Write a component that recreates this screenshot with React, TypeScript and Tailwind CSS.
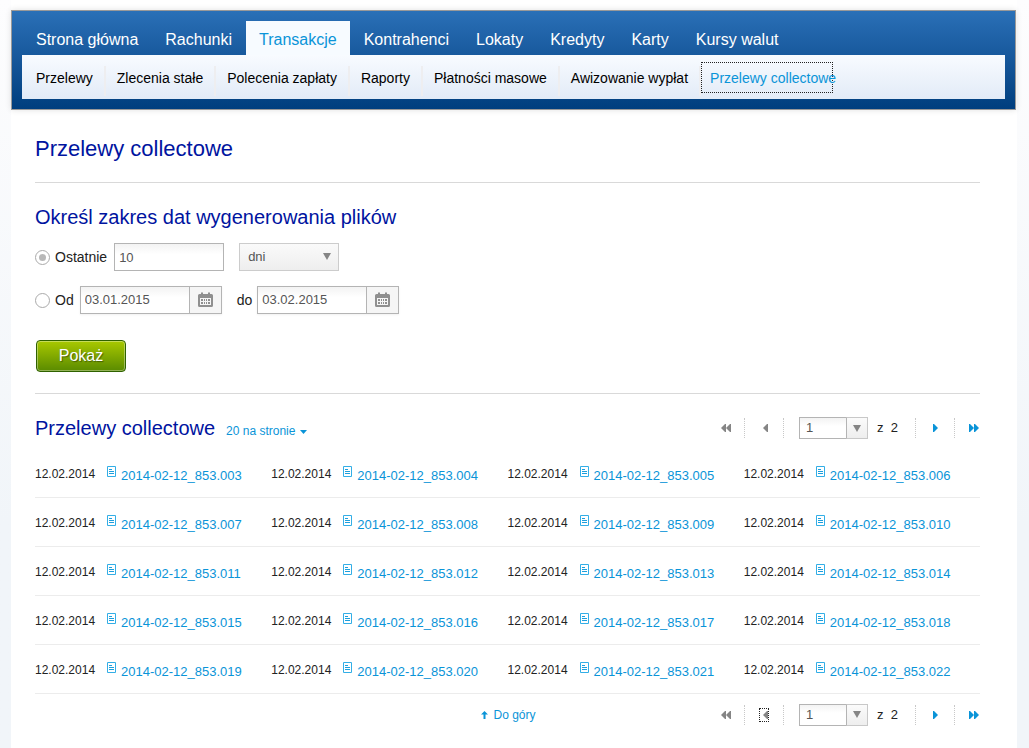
import { useState } from "react";

const mainNav = [
  "Strona główna",
  "Rachunki",
  "Transakcje",
  "Kontrahenci",
  "Lokaty",
  "Kredyty",
  "Karty",
  "Kursy walut",
];

const subNav = [
  "Przelewy",
  "Zlecenia stałe",
  "Polecenia zapłaty",
  "Raporty",
  "Płatności masowe",
  "Awizowanie wypłat",
];

const rows = [
  ["003", "004", "005", "006"],
  ["007", "008", "009", "010"],
  ["011", "012", "013", "014"],
  ["015", "016", "017", "018"],
  ["019", "020", "021", "022"],
];

function DownArrow({ className = "" }: { className?: string }) {
  return (
    <svg viewBox="0 0 8 7" className={`h-[7px] w-2 fill-[#858585] ${className}`} aria-hidden="true">
      <path d="M0 0h8L4 7z" />
    </svg>
  );
}

function CalendarIcon() {
  return (
    <svg viewBox="0 0 15 15" className="mb-px h-[15px] w-[15px]" aria-hidden="true">
      <path
        fill="#8f8f8f"
        fillRule="evenodd"
        d="M3 1.2a1 1 0 0 1 2 0V2h5v-.8a1 1 0 0 1 2 0V2h1.500q1.500 0 1.500 1.500v10q0 1.500-1.500 1.500h-12Q0 15 0 13.500v-10Q0 2 1.500 2H3zM2 6v7h11V6z"
      />
      <path fill="#8f8f8f" d="M3 7h2v2H3zM6 7h1v2H6zM8 7h1v2H8zM10 7h2v2h-2zM3 10h2v2H3zM6 10h1v2H6zM8 10h1v2H8zM10 10h2v2h-2z" />
    </svg>
  );
}

function FileIcon() {
  return (
    <svg viewBox="0 0 9 11" className="h-[11px] w-[9px] shrink-0" aria-hidden="true">
      <path fill="none" stroke="#33aee6" d="M.5.500h8v10h-8z" />
      <path stroke="#1c9fdd" d="M2 3.500h3M2 5.500h5M2 7.500h5" />
    </svg>
  );
}

function PageArrow({ direction, double }: { direction: "left" | "right"; double?: boolean }) {
  const left = direction === "left";
  return (
    <svg
      viewBox={double ? "0 0 10 8" : "0 0 5 8"}
      className={`h-2 ${double ? "w-[10px]" : "w-[5px]"} ${left ? "rotate-180 fill-[#858585]" : "fill-[#0a94d8]"}`}
      aria-hidden="true"
    >
      <path d="M0 0h1l4 4-4 4H0z" />
      {double && <path d="M5 0h1l4 4-4 4H5z" />}
    </svg>
  );
}

function Separator() {
  return <span className="h-5 w-px border-l border-dotted border-[#c8c8c8]" />;
}

function Pager({ id, focused }: { id: string; focused?: boolean }) {
  return (
    <nav aria-label="Strony" className="flex items-center pr-px text-[13px] text-[#222]">
      <button type="button" aria-label="Pierwsza strona" className="mr-[13px]">
        <PageArrow direction="left" double />
      </button>
      <Separator />
      <button
        type="button"
        aria-label="Poprzednia strona"
        className={`mx-[15px] flex h-3 w-2 items-center justify-end ${focused ? "outline-1 outline-dotted outline-[#222]" : ""}`}
      >
        <PageArrow direction="left" />
      </button>
      <Separator />
      <div className="relative ml-[15px]">
        <select
          id={id}
          aria-label="Numer strony"
          className="block h-[22px] w-[69px] appearance-none border border-[#b4b4b4] bg-linear-to-b from-[#f3f3f3] to-white to-40% pl-[6px] text-[13px] text-[#555]"
        >
          <option>1</option>
          <option>2</option>
        </select>
        <span className="pointer-events-none absolute inset-y-0 right-0 flex w-[22px] items-center justify-center border border-[#c8c8c8] border-l-[#b4b4b4] bg-linear-to-b from-[#fbfbfb] to-[#eee]">
          <DownArrow />
        </span>
      </div>
      <label htmlFor={id} className="mr-[17px] ml-[9px] whitespace-pre">
        z{"  "}2
      </label>
      <Separator />
      <button type="button" aria-label="Następna strona" className="mr-[16px] ml-[17px]">
        <PageArrow direction="right" />
      </button>
      <Separator />
      <button type="button" aria-label="Ostatnia strona" className="ml-[14px]">
        <PageArrow direction="right" double />
      </button>
    </nav>
  );
}

function Radio({ id, checked, onChange }: { id: string; checked: boolean; onChange: () => void }) {
  return (
    <span className="relative mr-[5px] flex h-[15px] w-[15px] items-center justify-center">
      <input
        id={id}
        type="radio"
        name="range"
        checked={checked}
        onChange={onChange}
        className="h-[15px] w-[15px] appearance-none rounded-full border border-[#aaa] bg-white"
      />
      {checked && <span className="pointer-events-none absolute h-[7px] w-[7px] rounded-full bg-[#b8b8b8]" />}
    </span>
  );
}

function DateField({ id, value }: { id: string; value: string }) {
  return (
    <span className="flex h-7 shadow-[0_1px_2px_rgba(0,0,0,0.06)]">
      <input
        id={id}
        type="text"
        defaultValue={value}
        className="w-[110px] border border-[#b4b4b4] bg-linear-to-b from-[#f3f3f3] to-white to-40% px-1 text-[13px] text-[#555]"
      />
      <button
        type="button"
        aria-label="Wybierz datę"
        className="flex w-8 items-center justify-center border border-l-0 border-[#b4b4b4] bg-[#f5f5f5]"
      >
        <CalendarIcon />
      </button>
    </span>
  );
}

export default function App() {
  const [mode, setMode] = useState("last");

  return (
    <div className="min-h-screen bg-linear-to-b from-[#fdfdfe] to-[#f1f5f9] to-70% pr-3 pl-[11px] font-['Liberation_Sans',Arial,sans-serif] text-[#222]">
      <div className="min-h-screen bg-white pt-[10px] pb-[22px]">
        <header className="mr-px border border-[#999] bg-linear-to-b from-[#2a70b7] to-[#003e7e] px-[10px] py-[10px] shadow-[0_0_6px_rgba(0,0,0,0.12)]">
          <nav aria-label="Menu główne">
            <ul className="flex gap-px pl-px text-base">
              {mainNav.map((item) => (
                <li key={item}>
                  <a
                    href="#"
                    className={`flex h-[34px] items-center px-[13px] pt-[3px] whitespace-nowrap ${
                      item === "Transakcje" ? "bg-[#f7fbff] text-[#0a94d8]" : "text-white"
                    }`}
                  >
                    {item}
                  </a>
                </li>
              ))}
            </ul>
          </nav>
          <nav aria-label="Podmenu" className="bg-linear-to-b from-[#f8fbff] to-[#e2ebf7]">
            <ul className="flex h-11 items-center pl-[3px] text-sm text-black">
              {subNav.map((item) => (
                <li
                  key={item}
                  className="mt-2 flex h-[30px] items-center border-r-2 border-[#eeeef0] px-[11px] pb-[6px]"
                >
                  <a href="#" className="whitespace-nowrap">
                    {item}
                  </a>
                </li>
              ))}
              <li>
                <a
                  href="#"
                  className="flex h-[31px] w-[132px] items-center border border-dotted border-[#222] pt-px pl-2 whitespace-nowrap text-[#0a94d8]"
                >
                  Przelewy collectowe
                </a>
              </li>
            </ul>
          </nav>
        </header>

        <main className="mr-[37px] ml-6">
          <h1 className="border-b border-[#d9d9d9] pt-[25px] pb-[19px] text-[22px] leading-7 text-[#0014a0]">
            Przelewy collectowe
          </h1>

          <form className="border-b border-[#d9d9d9] pb-[21px]" onSubmit={(e) => e.preventDefault()}>
            <h2 className="pt-[22px] text-xl leading-6 text-[#0014a0]">Określ zakres dat wygenerowania plików</h2>
            <div className="mt-[14px] flex h-7 items-center text-sm">
              <Radio id="range-last" checked={mode === "last"} onChange={() => setMode("last")} />
              <label htmlFor="range-last">Ostatnie</label>
              <input
                type="text"
                aria-label="Liczba"
                defaultValue="10"
                className="ml-[7px] h-7 w-[110px] border border-[#b4b4b4] bg-linear-to-b from-[#f3f3f3] to-white to-40% px-1 text-[13px] text-[#555]"
              />
              <span className="relative ml-[15px]">
                <select
                  aria-label="Jednostka"
                  className="block h-7 w-[100px] appearance-none border border-[#ccc] bg-linear-to-b from-[#fafafa] to-[#eee] pl-2 text-[13px] text-[#555]"
                >
                  <option>dni</option>
                  <option>miesięcy</option>
                </select>
                <DownArrow className="pointer-events-none absolute top-[10px] right-2" />
              </span>
            </div>
            <div className="mt-[15px] flex h-7 items-center text-sm">
              <Radio id="range-dates" checked={mode === "dates"} onChange={() => setMode("dates")} />
              <label htmlFor="date-from" className="mr-[6px]">
                Od
              </label>
              <DateField id="date-from" value="03.01.2015" />
              <label htmlFor="date-to" className="mr-[5px] ml-[15px]">
                do
              </label>
              <DateField id="date-to" value="03.02.2015" />
            </div>
            <button
              type="submit"
              className="mt-[26px] ml-px block h-8 w-[90px] rounded-[4px] border border-[#2f6200] bg-linear-to-b from-[#a9c900] to-[#5a8b00] text-base text-white shadow-[inset_0_0_0_1px_rgba(255,255,255,0.35)] text-shadow-[1px_1px_1px_rgba(0,0,0,0.4)]"
            >
              Pokaż
            </button>
          </form>

          <section>
            <div className="flex items-center justify-between pt-[23px]">
              <div className="flex items-baseline">
                <h2 className="text-xl leading-[22px] text-[#0014a0]">Przelewy collectowe</h2>
                <button type="button" className="ml-[11px] flex items-center gap-[5px] text-xs text-[#0a94d8]">
                  20 na stronie
                  <svg viewBox="0 0 7 4" className="mt-[2px] h-1 w-[7px] fill-[#0a94d8]" aria-hidden="true">
                    <path d="M0 0h7L3.500 4z" />
                  </svg>
                </button>
              </div>
              <Pager id="page-top" />
            </div>

            <table className="mt-[9px] w-full table-fixed">
              <tbody>
                {rows.map((row) => (
                  <tr key={row[0]} className="h-[49px] border-b border-[#ececec]">
                    {row.map((n) => (
                      <td key={n} className="px-0 pt-[5px] pb-0 align-middle">
                        <div className="flex items-start">
                          <span className="w-[62px] text-xs leading-4">12.02.2014</span>
                          <a href="#" className="ml-[10px] flex items-start gap-[5px] text-[13px] text-[#0a94d8]">
                            <FileIcon />
                            <span className="pt-[2px] leading-4">2014-02-12_853.{n}</span>
                          </a>
                        </div>
                      </td>
                    ))}
                  </tr>
                ))}
              </tbody>
            </table>

            <div className="grid grid-cols-[1fr_auto_1fr] items-center pt-[10px]">
              <span />
              <a href="#" className="flex items-center gap-[5px] pl-[2px] text-xs text-[#0a94d8]">
                <svg viewBox="0 0 7 8" className="h-2 w-[7px] fill-[#0a94d8]" aria-hidden="true">
                  <path d="M3.500 0 7 3.500H4.500V8h-2V3.500H0z" />
                </svg>
                Do góry
              </a>
              <div className="flex justify-end">
                <Pager id="page-bottom" focused />
              </div>
            </div>
          </section>
        </main>
      </div>
    </div>
  );
}
